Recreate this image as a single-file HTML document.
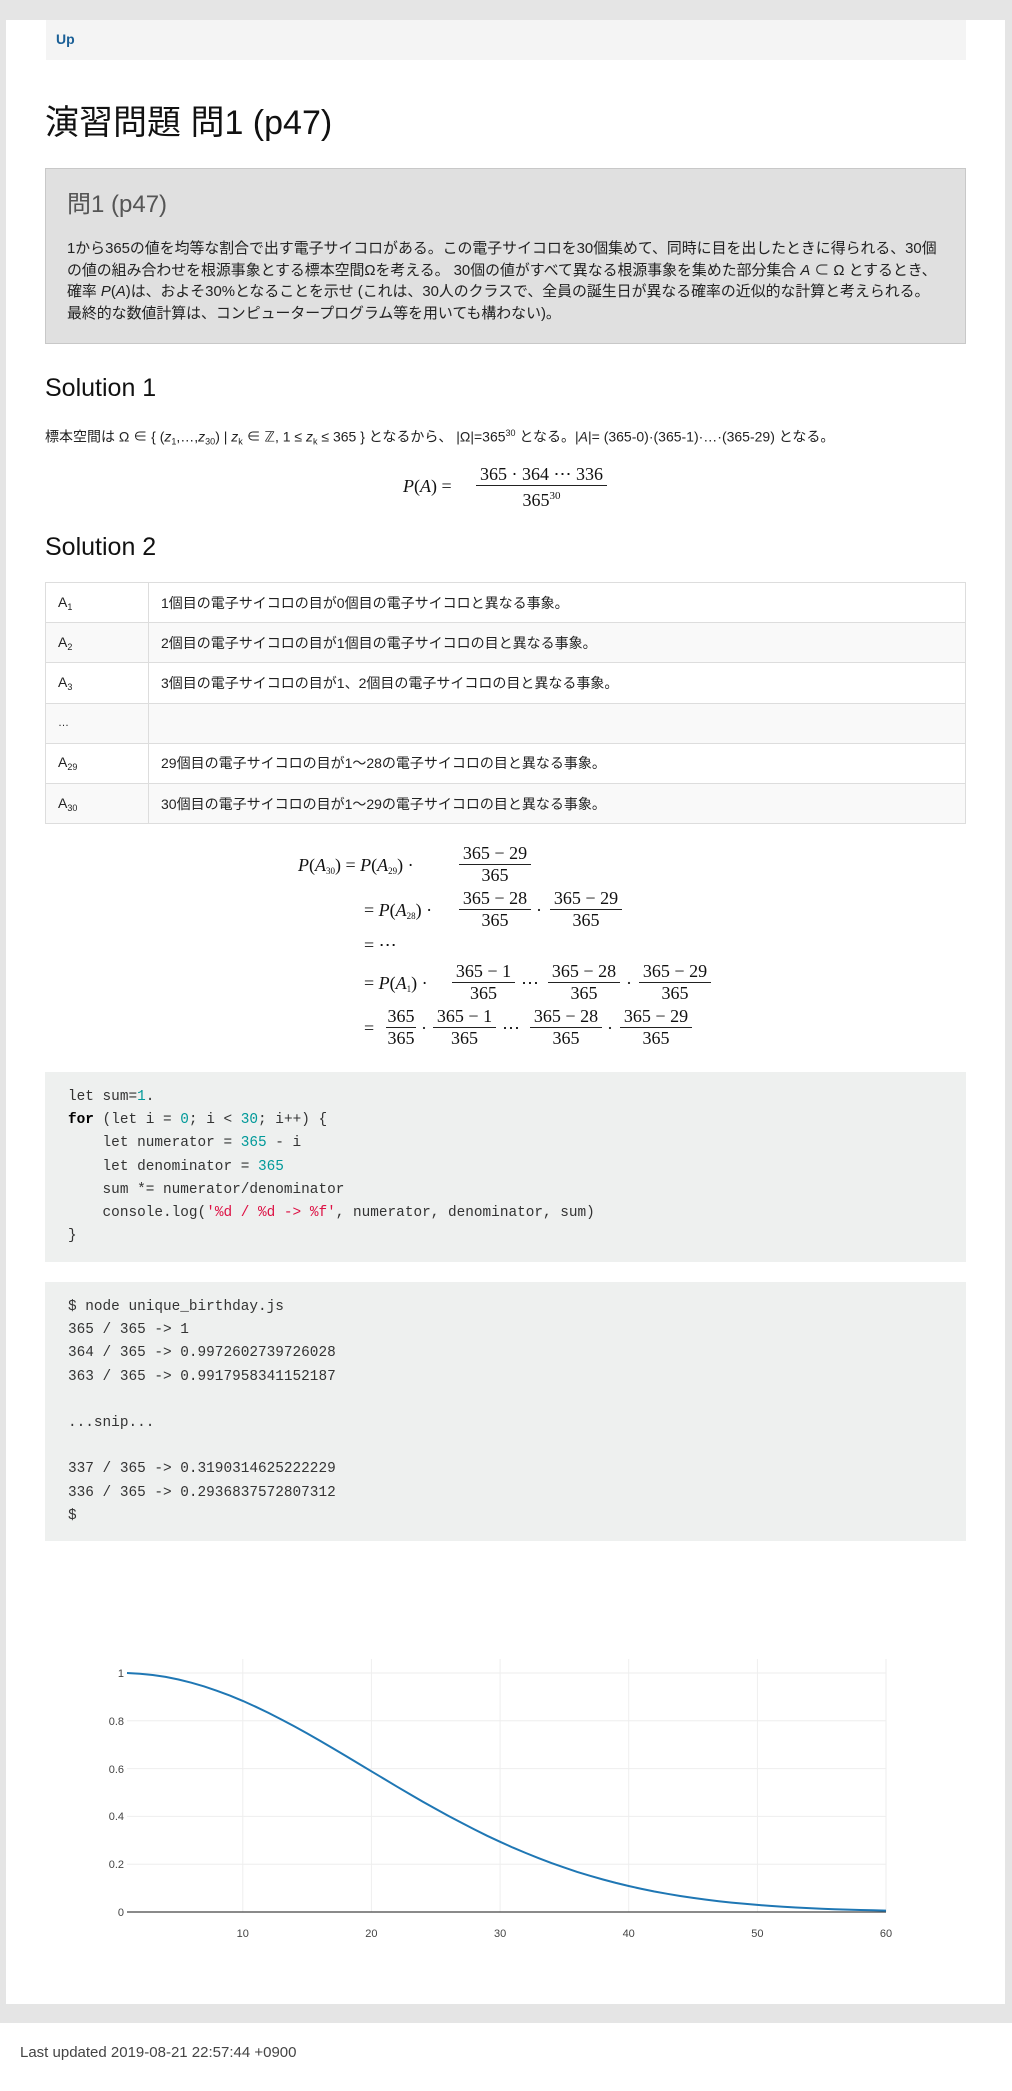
<!DOCTYPE html>
<html><head><meta charset="utf-8">
<style>
*{margin:0;padding:0;box-sizing:border-box}
body{width:1012px;height:2091px;background:#fff;position:relative;font-family:"Liberation Sans","Noto Sans CJK JP",sans-serif;color:#222;overflow:hidden}
.a{position:absolute;white-space:nowrap}
.m{font-family:"Liberation Serif","DejaVu Serif",serif;font-size:18px;color:#111;line-height:22px}
.fr{position:absolute;text-align:center;font-family:"Liberation Serif",serif;font-size:18px;color:#111}
.fr .n,.fr .d{height:21px;line-height:21px;white-space:nowrap}
.fr .b{height:1px;background:#222}
.code{position:absolute;left:45px;width:921px;background:#eef0ef;font-family:"Liberation Mono",monospace;font-size:14.4px;color:#333;line-height:23.2px;padding-left:23px;white-space:pre}
.num{color:#099}.str{color:#d14}
td{border:1px solid #ddd;font-size:14px;height:40.2px;padding-left:12px;vertical-align:middle}
tr:nth-child(even) td{background:#f9f9f9}
sub{font-size:9px;vertical-align:-3px}
</style></head><body>
<div class="a" style="left:0;top:0;width:1012px;height:2023px;background:#e5e5e5"></div>
<div class="a" style="left:6px;top:20px;width:999px;height:1984px;background:#fff"></div>
<div class="a" style="left:46px;top:20px;width:920px;height:40px;background:#f4f4f4"></div>
<div class="a" style="left:56px;top:31px;font-size:14px;font-weight:bold;color:#1a5f96">Up</div>

<div class="a" style="left:45px;top:100px;font-size:34px;color:#111;line-height:46px">演習問題 問1 (p47)</div>

<div class="a" style="left:45px;top:168px;width:921px;height:176px;background:#e0e0e0;border:1px solid #c8c8c8"></div>
<div class="a" style="left:67px;top:189px;font-size:24px;color:#555;line-height:32px">問1 (p47)</div>
<div class="a" style="left:67px;top:239px;font-size:14.9px;line-height:21.7px;color:#222">1から365の値を均等な割合で出す電子サイコロがある。この電子サイコロを30個集めて、同時に目を出したときに得られる、30個<br>の値の組み合わせを根源事象とする標本空間Ωを考える。 30個の値がすべて異なる根源事象を集めた部分集合 <i>A</i> ⊂ Ω とするとき、<br>確率 <i>P</i>(<i>A</i>)は、およそ30%となることを示せ (これは、30人のクラスで、全員の誕生日が異なる確率の近似的な計算と考えられる。<br>最終的な数値計算は、コンピュータープログラム等を用いても構わない)。</div>

<div class="a" style="left:45px;top:371px;font-size:25px;line-height:34px;color:#111">Solution 1</div>
<div class="a" style="left:45px;top:423px;font-size:14px;line-height:20px">標本空間は Ω ∈ { (<i>z</i><sub>1</sub>,…,<i>z</i><sub>30</sub>) | <i>z</i><sub>k</sub> ∈ ℤ, 1 ≤ <i>z</i><sub>k</sub> ≤ 365 } となるから、 |Ω|=365<sup style="font-size:9px">30</sup> となる。|<i>A</i>|= (365-0)·(365-1)·…·(365-29) となる。</div>

<div class="a m" style="left:403px;top:475px"><i>P</i>(<i>A</i>) =</div>
<div class="fr" style="left:476px;top:464px;width:131px"><div class="n">365 · 364 ⋯ 336</div><div class="b"></div><div class="d">365<sup style="font-size:11px">30</sup></div></div>

<div class="a" style="left:45px;top:530px;font-size:25px;line-height:34px;color:#111">Solution 2</div>

<table class="a" style="left:45px;top:582px;width:921px;border-collapse:collapse;white-space:normal">
<tr><td style="width:103px">A<sub>1</sub></td><td>1個目の電子サイコロの目が0個目の電子サイコロと異なる事象。</td></tr>
<tr><td>A<sub>2</sub></td><td>2個目の電子サイコロの目が1個目の電子サイコロの目と異なる事象。</td></tr>
<tr><td>A<sub>3</sub></td><td>3個目の電子サイコロの目が1、2個目の電子サイコロの目と異なる事象。</td></tr>
<tr><td style="font-size:11px">…</td><td></td></tr>
<tr><td>A<sub>29</sub></td><td>29個目の電子サイコロの目が1〜28の電子サイコロの目と異なる事象。</td></tr>
<tr><td>A<sub>30</sub></td><td>30個目の電子サイコロの目が1〜29の電子サイコロの目と異なる事象。</td></tr>
</table>

<!-- aligned equations: bars at 865, 910, (945), 983, 1028 -->
<div class="a m" style="left:298px;top:854px"><i>P</i>(<i>A</i><sub>30</sub>) = <i>P</i>(<i>A</i><sub>29</sub>) ·</div>
<div class="fr" style="left:459px;top:843px;width:72px"><div class="n">365 − 29</div><div class="b"></div><div class="d">365</div></div>

<div class="a m" style="left:364px;top:899px">= <i>P</i>(<i>A</i><sub>28</sub>) ·</div>
<div class="fr" style="left:459px;top:888px;width:72px"><div class="n">365 − 28</div><div class="b"></div><div class="d">365</div></div>
<div class="a m" style="left:536px;top:899px">·</div>
<div class="fr" style="left:550px;top:888px;width:72px"><div class="n">365 − 29</div><div class="b"></div><div class="d">365</div></div>

<div class="a m" style="left:364px;top:934px">= ⋯</div>

<div class="a m" style="left:364px;top:972px">= <i>P</i>(<i>A</i><sub>1</sub>) ·</div>
<div class="fr" style="left:452px;top:961px;width:63px"><div class="n">365 − 1</div><div class="b"></div><div class="d">365</div></div>
<div class="a m" style="left:521px;top:972px">⋯</div>
<div class="fr" style="left:548px;top:961px;width:72px"><div class="n">365 − 28</div><div class="b"></div><div class="d">365</div></div>
<div class="a m" style="left:626px;top:972px">·</div>
<div class="fr" style="left:639px;top:961px;width:72px"><div class="n">365 − 29</div><div class="b"></div><div class="d">365</div></div>

<div class="a m" style="left:364px;top:1017px">=</div>
<div class="fr" style="left:386px;top:1006px;width:30px"><div class="n">365</div><div class="b"></div><div class="d">365</div></div>
<div class="a m" style="left:421px;top:1017px">·</div>
<div class="fr" style="left:433px;top:1006px;width:63px"><div class="n">365 − 1</div><div class="b"></div><div class="d">365</div></div>
<div class="a m" style="left:502px;top:1017px">⋯</div>
<div class="fr" style="left:530px;top:1006px;width:72px"><div class="n">365 − 28</div><div class="b"></div><div class="d">365</div></div>
<div class="a m" style="left:607px;top:1017px">·</div>
<div class="fr" style="left:620px;top:1006px;width:72px"><div class="n">365 − 29</div><div class="b"></div><div class="d">365</div></div>

<div class="code" style="top:1072px;height:190px;padding-top:14px">let sum=<span class="num">1</span>.
<b style="color:#000">for</b> (let i = <span class="num">0</span>; i &lt; <span class="num">30</span>; i++) {
    let numerator = <span class="num">365</span> - i
    let denominator = <span class="num">365</span>
    sum *= numerator/denominator
    console.log(<span class="str">'%d / %d -&gt; %f'</span>, numerator, denominator, sum)
}</div>

<div class="code" style="top:1282px;height:259px;padding-top:14px">$ node unique_birthday.js
365 / 365 -&gt; 1
364 / 365 -&gt; 0.9972602739726028
363 / 365 -&gt; 0.9917958341152187

...snip...

337 / 365 -&gt; 0.3190314625222229
336 / 365 -&gt; 0.2936837572807312
$</div>

<svg class="a" style="left:0;top:1640px" width="1012" height="320" viewBox="0 0 1012 320">
<g stroke="#eee" stroke-width="1">
<line x1="242.8" y1="19" x2="242.8" y2="272"/><line x1="371.4" y1="19" x2="371.4" y2="272"/><line x1="500.1" y1="19" x2="500.1" y2="272"/><line x1="628.7" y1="19" x2="628.7" y2="272"/><line x1="757.4" y1="19" x2="757.4" y2="272"/><line x1="886" y1="19" x2="886" y2="272"/>
<line x1="127" y1="33" x2="886" y2="33"/><line x1="127" y1="80.8" x2="886" y2="80.8"/><line x1="127" y1="128.6" x2="886" y2="128.6"/><line x1="127" y1="176.4" x2="886" y2="176.4"/><line x1="127" y1="224.2" x2="886" y2="224.2"/>
</g>
<line x1="127" y1="272" x2="886" y2="272" stroke="#444" stroke-width="1.2"/>
<polyline fill="none" stroke="#1f77b4" stroke-width="2" points="127,33 139.9,33.7 152.7,35 165.6,36.9 178.5,39.5 191.3,42.7 204.2,46.4 217,50.8 229.9,55.6 242.8,60.9 255.6,66.7 268.5,72.9 281.4,79.5 294.2,86.3 307.1,93.4 320,100.8 332.8,108.3 345.7,115.9 358.6,123.6 371.4,131.3 384.3,139 397.1,146.7 410,154.2 422.9,161.7 435.7,168.9 448.6,176 461.5,182.8 474.3,189.4 487.2,195.8 500.1,201.8 512.9,207.6 525.8,213 538.7,218.2 551.5,223.1 564.4,227.6 577.2,231.9 590.1,235.8 603,239.5 615.8,242.9 628.7,246 641.6,248.9 654.4,251.5 667.3,253.8 680.2,256 693,257.9 705.9,259.6 718.8,261.2 731.6,262.6 744.5,263.8 757.4,264.9 770.2,265.9 783.1,266.7 795.9,267.5 808.8,268.1 821.7,268.7 834.5,269.2 847.4,269.6 860.3,270 873.1,270.3 886,270.6"/>
<g font-family="Liberation Sans, sans-serif" font-size="11" fill="#444" text-anchor="end">
<text x="124" y="37">1</text><text x="124" y="85">0.8</text><text x="124" y="133">0.6</text><text x="124" y="180">0.4</text><text x="124" y="228">0.2</text><text x="124" y="276">0</text>
</g>
<g font-family="Liberation Sans, sans-serif" font-size="11" fill="#444" text-anchor="middle">
<text x="242.8" y="297">10</text><text x="371.4" y="297">20</text><text x="500.1" y="297">30</text><text x="628.7" y="297">40</text><text x="757.4" y="297">50</text><text x="886" y="297">60</text>
</g>
</svg>

<div class="a" style="left:20px;top:2043px;font-size:15px;color:#444;line-height:20px">Last updated 2019-08-21 22:57:44 +0900</div>
</body></html>
